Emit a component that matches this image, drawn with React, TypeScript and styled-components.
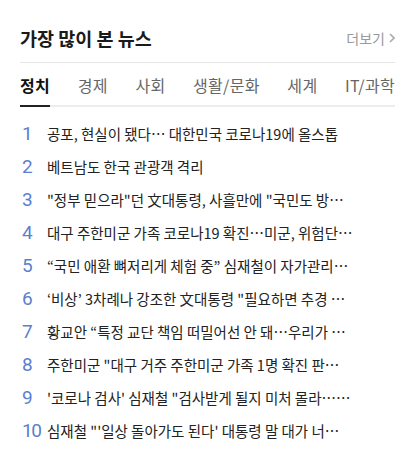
import React from "react";
import styled, { createGlobalStyle } from "styled-components";

const GlobalStyle = createGlobalStyle`
  body {
    margin: 0;
    background: #fff;
    font-family: "Noto Sans CJK KR", "Noto Sans", sans-serif;
  }
`;

const tabs = ["정치", "경제", "사회", "생활/문화", "세계", "IT/과학"];

const news = [
  "공포, 현실이 됐다… 대한민국 코로나19에 올스톱",
  "베트남도 한국 관광객 격리",
  "\"정부 믿으라\"던 文대통령, 사흘만에 \"국민도 방…",
  "대구 주한미군 가족 코로나19 확진…미군, 위험단…",
  "“국민 애환 뼈저리게 체험 중” 심재철이 자가관리…",
  "‘비상’ 3차례나 강조한 文대통령 \"필요하면 추경 …",
  "황교안 “특정 교단 책임 떠밀어선 안 돼…우리가 …",
  "주한미군 \"대구 거주 주한미군 가족 1명 확진 판…",
  "'코로나 검사' 심재철 \"검사받게 될지 미처 몰라……",
  "심재철 \"'일상 돌아가도 된다' 대통령 말 대가 너…",
];

const Panel = styled.section`
  width: 375px;
  padding: 21px 24px 0 20px;
`;

const Header = styled.header`
  display: flex;
  align-items: center;
  justify-content: space-between;
  box-sizing: border-box;
  height: 42px;
  padding-bottom: 8px;
  border-bottom: 1px solid #e6e6e6;
`;

const Title = styled.h2`
  margin: 0;
  font-size: 18.5px;
  line-height: 26px;
  font-weight: 700;
  color: #1a1a1a;
`;

const More = styled.a`
  display: flex;
  align-items: center;
  gap: 4px;
  font-size: 14px;
  line-height: 20px;
  color: #999;
  text-decoration: none;
`;

const TabBar = styled.nav`
  display: flex;
  justify-content: space-between;
  box-sizing: border-box;
  height: 44px;
  border-bottom: 2px solid #ececec;
`;

const Tab = styled.span<{ $active?: boolean }>`
  display: flex;
  align-items: center;
  box-sizing: border-box;
  height: 44px;
  padding-top: 2px;
  font-size: 16px;
  letter-spacing: 0.3px;
  color: ${(p) => (p.$active ? "#111" : "#666")};
  font-weight: ${(p) => (p.$active ? 700 : 400)};
  border-bottom: 2px solid ${(p) => (p.$active ? "#222" : "transparent")};
`;

const List = styled.ol`
  list-style: none;
  margin: 10px 0 0;
  padding: 0;
`;

const Item = styled.li`
  display: flex;
  align-items: center;
  height: 33px;
`;

const Rank = styled.span`
  width: 25px;
  padding-left: 2px;
  font-family: "Roboto", "Noto Sans", sans-serif;
  font-size: 19px;
  letter-spacing: -1.5px;
  color: #5b7fd1;
  flex-shrink: 0;
`;

const Headline = styled.a`
  font-size: 14.5px;
  color: #222;
  white-space: nowrap;
  overflow: hidden;
  text-decoration: none;
`;

export default function App() {
  return (
    <>
      <GlobalStyle />
      <Panel>
        <Header>
          <Title>가장 많이 본 뉴스</Title>
          <More href="#">
            더보기
            <svg width="6" height="10" viewBox="0 0 6 10">
              <path d="M1 1l4 4-4 4" fill="none" stroke="#aaa" strokeWidth="1.6" />
            </svg>
          </More>
        </Header>
        <TabBar>
          {tabs.map((t, i) => (
            <Tab key={t} $active={i === 0}>
              {t}
            </Tab>
          ))}
        </TabBar>
        <List>
          {news.map((n, i) => (
            <Item key={i}>
              <Rank>{i + 1}</Rank>
              <Headline href="#">{n}</Headline>
            </Item>
          ))}
        </List>
      </Panel>
    </>
  );
}
